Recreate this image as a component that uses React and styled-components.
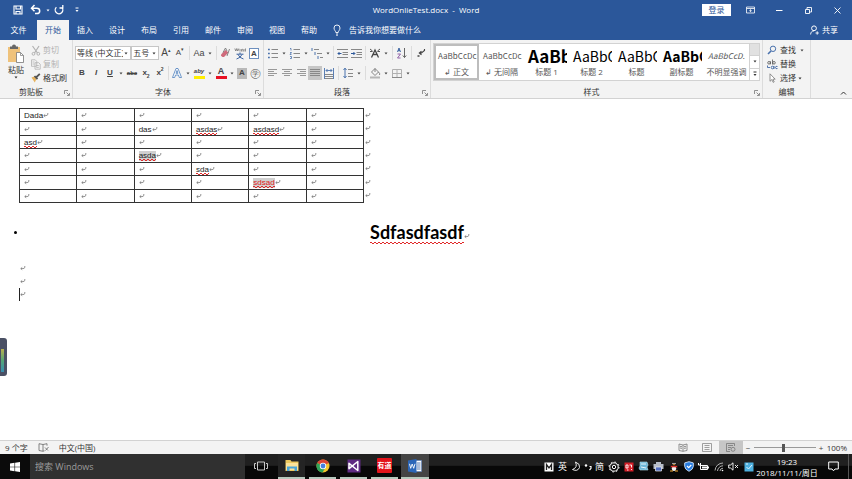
import React from "react";
import styled, { createGlobalStyle, css } from "styled-components";

const ui = '"Open Sans", "Noto Sans CJK SC", sans-serif';
const blue = "#2b579a";

const Global = createGlobalStyle`
  *, *::before, *::after { box-sizing: border-box; }
  body { margin: 0; font-family: ${ui}; font-size: 8px; line-height: 12px; color: #333; }
  button, input, select { font: inherit; color: inherit; margin: 0; padding: 0; border: 0; background: none; border-radius: 0; }
  svg { display: block; flex: none; }
`;

const Window = styled.div`
  position: relative;
  display: flex;
  flex-direction: column;
  min-height: 100vh;
  background: #fff;
  overflow: hidden;
`;

/* ---------- title bar ---------- */
const TitleBar = styled.header`
  display: grid;
  grid-template-columns: 1fr auto 1fr;
  align-items: center;
  height: 20px;
  background: ${blue};
  color: #fff;
`;
const QuickAccess = styled.div`
  display: flex;
  align-items: center;
  padding-left: 10px;
`;
const WindowControls = styled.div`
  display: flex;
  align-items: center;
  justify-content: flex-end;
`;
const DocTitle = styled.h1`
  margin: 0;
  font-size: 8px;
  font-weight: 400;
  line-height: 20px;
`;
const BarButton = styled.button`
  display: flex;
  align-items: center;
  justify-content: center;
  width: ${(p) => p.$w || 16}px;
  height: 18px;
`;
const SignIn = styled.button`
  width: 29px;
  height: 12px;
  margin-right: 5px;
  background: #fff;
  color: ${blue};
  line-height: 12px;
`;

/* ---------- tabs ---------- */
const TabBar = styled.nav`
  display: flex;
  align-items: stretch;
  height: 20px;
  background: ${blue};
  color: #fff;
`;
const Tab = styled.button`
  width: ${(p) => (p.$file ? 37 : 32)}px;
  line-height: 20px;
  ${(p) => p.$active && css`background: #f3f3f3; color: ${blue};`}
`;
const TellMe = styled.button`
  display: flex;
  align-items: center;
  gap: 8px;
  margin-left: 8px;
`;
const Share = styled.button`
  display: flex;
  align-items: center;
  gap: 3px;
  margin-left: auto;
  padding-right: 14px;
`;

/* ---------- ribbon ---------- */
const Ribbon = styled.div`
  display: flex;
  height: 59px;
  background: #f3f3f3;
  border-bottom: 1px solid #d2d2d2;
`;
const Group = styled.section`
  position: relative;
  display: flex;
  flex-direction: column;
  flex: ${(p) => (p.$grow ? "1 1 0" : "none")};
  min-width: 0;
  width: ${(p) => (p.$w ? p.$w + "px" : "auto")};
  padding: 3px 2px 0;
  border-right: 1px solid #dcdcdc;
`;
const GroupLabel = styled.h2`
  margin: auto ${(p) => (p.$wide ? 0 : 10)}px 0 0;
  font-size: 8px;
  font-weight: 400;
  line-height: 12px;
  text-align: center;
`;
const Launcher = styled.button`
  position: absolute;
  right: 2px;
  bottom: 2px;
`;
const ToolRow = styled.div`
  display: flex;
  align-items: center;
  height: 20px;
`;
const Tool = styled.button`
  display: flex;
  align-items: center;
  justify-content: center;
  flex: none;
  width: ${(p) => p.$w || 14}px;
  height: 14px;
  color: #444;
  background: ${(p) => (p.$on ? "#c6c6c6" : "none")};
`;
const Divider = styled.span`
  flex: none;
  width: 1px;
  height: 14px;
  margin: 0 ${(p) => p.$m || 2}px;
  background: #dcdcdc;
`;
const Glyph = styled.span`
  font-family: "Liberation Sans", sans-serif;
  font-size: ${(p) => p.$size || 9}px;
  font-weight: ${(p) => (p.$bold ? 700 : 400)};
  font-style: ${(p) => (p.$italic ? "italic" : "normal")};
  text-decoration: ${(p) => p.$line || "none"};
  line-height: 12px;
  sub, sup { font-size: 5px; line-height: 0; }
`;
const LetterBox = styled.span`
  width: 10px;
  height: 11px;
  background: ${(p) => (p.$fill ? "#b9b9b9" : "#fff")};
  border: ${(p) => (p.$fill ? "0" : "1px solid #6d8fbe")};
  font: 700 8px/10px "Liberation Sans", sans-serif;
  text-align: center;
`;
const Underbar = styled.span`
  width: 11px;
  height: 12px;
  border-bottom: 3px solid ${(p) => p.$color};
  font: ${(p) => (p.$italic ? "italic 700 6px/9px" : "700 9px/9px")} "Liberation Sans", sans-serif;
  text-align: center;
`;
const Combo = styled.label`
  display: grid;
  align-items: center;
  width: ${(p) => p.$w}px;
  height: 14px;
  background: #fff;
  border: 1px solid #c6c6c6;
  select, svg { grid-area: 1 / 1; }
  select { appearance: none; width: 100%; padding: 0 7px 0 1px; line-height: 12px; overflow: hidden; }
  svg { justify-self: end; margin-right: 2px; pointer-events: none; }
`;
const Clipboard = styled.div`
  display: flex;
  gap: 5px;
  padding-left: 4px;
`;
const PasteButton = styled.button`
  display: flex;
  flex-direction: column;
  align-items: center;
  width: 20px;
  padding-top: 1px;
`;
const Stack = styled.div`
  display: flex;
  flex-direction: column;
`;
const LineButton = styled.button`
  display: flex;
  align-items: center;
  gap: 2px;
  height: 14px;
  color: ${(p) => (p.$off ? "#b1b1b1" : "#333")};
  white-space: nowrap;
`;
const IconSlot = styled.span`
  display: flex;
  align-items: center;
  justify-content: center;
  width: 13px;
`;
const Gallery = styled.div`
  display: flex;
  height: 38px;
  background: #fff;
  border: 1px solid #d2d2d2;
`;
const StyleTile = styled.button`
  display: flex;
  flex-direction: column;
  align-items: center;
  flex: 1 1 0;
  min-width: 0;
  overflow: hidden;
  border: 2px solid ${(p) => (p.$active ? "#bdbdbd" : "transparent")};
  color: #555;
  white-space: nowrap;
`;
const Preview = styled.span`
  width: 100%;
  height: 20px;
  padding-left: 2px;
  overflow: hidden;
  white-space: nowrap;
  text-align: left;
  color: ${(p) => (p.$size > 10 ? "#000" : "#555")};
  font: ${(p) => (p.$italic ? "italic" : "normal")} ${(p) => (p.$bold ? 700 : 400)} ${(p) => p.$size}px/20px "Noto Sans CJK SC", sans-serif;
`;
const GalleryScroll = styled.div`
  display: flex;
  flex-direction: column;
  width: 10px;
  border-left: 1px solid #d2d2d2;
`;
const ScrollButton = styled.button`
  display: flex;
  align-items: center;
  justify-content: center;
  flex: 1;
  background: ${(p) => (p.$off ? "#e1e1e1" : "#fff")};
  & + & { border-top: 1px solid #d2d2d2; }
`;
const Collapse = styled.button`
  margin: auto 5px 2px auto;
`;
const RibbonEnd = styled.div`
  display: flex;
  width: 41px;
`;

/* ---------- document ---------- */
const Page = styled.main`
  flex: 1;
  padding: 9px 26px 0 19px;
  color: #222;
  font-family: "Liberation Sans", sans-serif;
`;
const Grid = styled.table`
  width: 354px;
  height: 95px;
  table-layout: fixed;
  border-collapse: collapse;
  line-height: 11px;
`;
const Cell = styled.td`
  padding: 1px 0 0 4px;
  border: 1px solid #333;
  white-space: nowrap;
`;
const EndCell = styled.td`
  width: 9px;
  padding: 0 0 0 1px;
`;
const Run = styled.span`
  color: ${(p) => (p.$red ? "#e02020" : "inherit")};
  background-color: ${(p) => (p.$marked ? "#d0d0d0" : "transparent")};
  ${(p) => p.$wavy && css`
    padding-bottom: 1px;
    background-image:
      repeating-linear-gradient(90deg, #e02828 0 2px, transparent 2px 4px),
      repeating-linear-gradient(90deg, transparent 0 2px, #e02828 2px 4px);
    background-size: 100% 1px;
    background-position: 0 calc(100% - 1px), 0 100%;
    background-repeat: no-repeat;
  `}
`;
const Return = styled.svg`
  display: inline-block;
  vertical-align: baseline;
`;
const Heading = styled.h2`
  display: grid;
  grid-template-columns: 1fr auto 1fr;
  align-items: center;
  margin: 16px 0 17px -5px;
  color: #000;
  font: 700 18px/26px Lato, sans-serif;
`;
const Bullet = styled.span`
  width: 3px;
  height: 3px;
  border-radius: 50%;
  background: #000;
`;
const Para = styled.p`
  margin: 0;
  line-height: 13px;
  height: 13px;
  border-left: 1px solid ${(p) => (p.$caret ? "#222" : "transparent")};
`;
const SideWidget = styled.aside`
  position: absolute;
  left: 0;
  top: 338px;
  width: 7px;
  height: 38px;
  padding: 11px 3px 4px 1px;
  background: #4a5064;
  border-radius: 0 3px 3px 0;
`;
const Meter = styled.div`
  height: 23px;
  background: linear-gradient(#b9b04f, #55a676 50%, #368eb1);
`;

/* ---------- status bar ---------- */
const StatusBar = styled.footer`
  display: flex;
  align-items: center;
  height: 14px;
  padding: 0 5px;
  background: #f3f3f3;
  border-top: 1px solid #d2d2d2;
`;
const StatusItem = styled.button`
  margin-right: ${(p) => p.$gap || 0}px;
  line-height: 12px;
`;
const StatusRight = styled.div`
  display: flex;
  align-items: center;
  margin-left: auto;
`;
const View = styled.button`
  display: flex;
  align-items: center;
  justify-content: center;
  width: 24px;
  height: 13px;
  background: ${(p) => (p.$on ? "#c6c6c6" : "none")};
`;
const Zoom = styled.input`
  appearance: none;
  width: 62px;
  height: 9px;
  background: linear-gradient(#999, #999) center / 100% 1px no-repeat;
  &::-webkit-slider-thumb { appearance: none; width: 3px; height: 8px; background: #555; }
`;

/* ---------- taskbar ---------- */
const Taskbar = styled.footer`
  display: flex;
  height: 25px;
  background: linear-gradient(#202020 0 45%, #080808 50%);
  color: #fff;
`;
const StartButton = styled.button`
  display: flex;
  align-items: center;
  justify-content: center;
  width: 30px;
  background: #0b0b0b;
`;
const SearchBox = styled.input`
  width: 215px;
  padding: 0 5px;
  background: #303030;
  color: #aaa;
  font-size: 9px;
  &::placeholder { color: #9c9c9c; opacity: 1; }
`;
const TaskButton = styled.button`
  display: flex;
  align-items: center;
  justify-content: center;
  width: ${(p) => (p.$active ? 28 : 27)}px;
  margin: 0 ${(p) => (p.$active ? 1 : 2)}px;
  background: ${(p) => (p.$active ? "#444" : p.$lit ? "#242424" : "none")};
  border-bottom: 2px solid ${(p) => (p.$idle ? "transparent" : "#b6c9bd")};
`;
const Tray = styled.div`
  display: flex;
  align-items: center;
  margin-left: auto;
`;
const TrayButton = styled.button`
  display: flex;
  align-items: center;
  justify-content: center;
  width: ${(p) => p.$w || 15}px;
  height: 22px;
  font-size: 9px;
`;
const Clock = styled.button`
  width: 62px;
  font-size: 8px;
  line-height: 11px;
  white-space: nowrap;
`;
const YoudaoTile = styled.span`
  width: 15px;
  height: 15px;
  border-radius: 1px;
  background: #e3141b;
  font: 700 7px/15px "Noto Sans CJK SC", sans-serif;
  text-align: center;
`;
const Edge = styled.span`
  width: 1px;
  height: 25px;
  margin-right: 3px;
  background: #555;
`;

/* ---------- icons ---------- */
const Icon = ({ w = 12, h = 12, children }) => (
  <svg width={w} height={h} viewBox={`0 0 ${w} ${h}`} fill="none" stroke="currentColor" strokeWidth="1" aria-hidden="true">
    {children}
  </svg>
);
const Caret = () => (
  <Icon w={4} h={3}><path d="M.5.5h3L2 2.500z" fill="currentColor" stroke="none" /></Icon>
);
const CaretTool = () => <Tool $w={8} aria-label="更多"><Caret /></Tool>;
const Mark = () => (
  <Return width="6" height="5" viewBox="0 0 6 5" fill="none" stroke="#777" strokeWidth=".8" aria-hidden="true">
    <path d="M4.800 0v1.200Q4.600 2.600 3 2.600H.8M2.200 1.400L.8 2.600l1.400 1.200" />
  </Return>
);
const LaunchIcon = () => (
  <Launcher aria-label="对话框">
    <Icon w={6} h={6}><path d="M.5 4V.5H4M2.500 2.500l2.500 2.500M5.500 3v2.500H3" stroke="#777" strokeWidth=".8" /></Icon>
  </Launcher>
);
const bars = (rows) => rows.map(([x1, x2], i) => <path key={i} d={`M${x1} ${1.5 + i * 2}H${x2}`} />);

const icons = {
  save: <Icon w={10}><path d="M1 2h8v8H1zM3 2v3h4.500V2M3 10V7.500h4V10" strokeWidth="1.100" /></Icon>,
  undo: <Icon><path d="M1.500 4.200h5.200a3 2.700 0 010 5.400H5M4.500 1L1.500 4.200l3 3" strokeWidth="1.500" /></Icon>,
  redo: <Icon><path d="M3.400 3.200A3.800 3.800 0 108.800 3.400M9.800 1v3H6.500" strokeWidth="1.300" /></Icon>,
  custom: <Icon w={6} h={6}><path d="M1.500 1h3" /><path d="M1.500 3h3L3 5z" fill="currentColor" stroke="none" /></Icon>,
  ribbonOpt: <Icon w={9} h={8}><path d="M.5 1h8v6h-8zM.5 2.500h8M4.500 6V3.800M3.300 4.800l1.200-1 1.200 1" strokeWidth=".8" /></Icon>,
  min: <Icon w={7} h={7}><path d="M0 3.500h6.500" /></Icon>,
  restore: <Icon w={7} h={7}><path d="M.5 2.500h4v4h-4zM2 2.500V.5h4.500v4.500h-2" strokeWidth=".9" /></Icon>,
  close: <Icon w={7} h={7}><path d="M.5.5l6 6M6.500.5l-6 6" strokeWidth=".9" /></Icon>,
  bulb: <Icon w={8} h={12}><path d="M2.800 8.500C2.800 7 1 6.200 1 4a3 3 0 016 0c0 2.200-1.800 3-1.800 4.500zM3 10h2M3.200 11.300h1.600" strokeWidth=".9" /></Icon>,
  person: <Icon w={9} h={10}><circle cx="4" cy="3.300" r="2.400" /><path d="M.6 9.500C.7 7 2 6 4 5.900M5.500 8h3.300M7.200 6.300v3.400" strokeWidth=".9" /></Icon>,
  paste: <Icon w={18} h={20}><path d="M1 3h12v15H1z" fill="#efc27b" stroke="none" /><path d="M3 2.500h2a2 2 0 014 0h2V5H3z" fill="#666" stroke="none" /><path d="M9.500 8.500h4l3 3v7h-7z" fill="#fff" stroke="#777" strokeWidth=".8" /><path d="M13.500 8.500v3h3" stroke="#777" strokeWidth=".7" /></Icon>,
  cut: <Icon w={10} h={11}><path d="M1.500 1l5 7M8 1L3.500 8" strokeWidth="1.200" /><circle cx="2.500" cy="8.800" r="1.400" /><circle cx="7.300" cy="8.800" r="1.400" /></Icon>,
  copy: <Icon w={10} h={11}><path d="M.5.8h3.700l1.500 1.500v5H.5zM4 3.700h3.700l1.500 1.500v5H4zM1.500 3h2M1.500 5h2M5.200 6.500h2.600M5.200 8.400h2.600" fill="#f3f3f3" strokeWidth=".8" /></Icon>,
  brush: <Icon w={10} h={10}><path d="M.5 4.500l3-1 2 2.200-1.700 3.800z" fill="#e6b35f" stroke="none" /><path d="M3.500 3l3 3.200M5 4.500l3.800-3.700" stroke="#555" strokeWidth="1.800" /></Icon>,
  eraser: <Icon><path d="M1 7.500L5.500 3l3 2.500L4 10H2.500L1 8.800z" fill="#cf6a7b" stroke="none" /><path d="M3 5.500L5.500 1l1.500 3M9.500 2L7 9" stroke="#777" strokeWidth=".9" /></Icon>,
  bullets: <Icon><g stroke="#888">{[2.5, 6.5, 10.5].map((y) => <path key={y} d={`M4.5 ${y}h6.500`} />)}</g><g stroke="#4a72ad" strokeWidth="1.600">{[2.5, 6.5, 10.5].map((y) => <path key={y} d={`M1 ${y}h1.800`} />)}</g></Icon>,
  numbers: <Icon><g stroke="#888">{[2.5, 6.5, 10.5].map((y) => <path key={y} d={`M4.5 ${y}h6.500`} />)}</g><path d="M1 1.500h1v2M1 5.500h1.500L1 7.500h1.500M1 9.500h1.500v2H1" stroke="#4a72ad" strokeWidth=".8" /></Icon>,
  multi: <Icon><path d="M3 2.500h5M6 6.500h5M9 10.500h3" stroke="#888" /><path d="M1 1v3M4 5v3M7 9v3" stroke="#4a72ad" /></Icon>,
  outdent: <Icon w={11} h={11}><path d="M0 1.500h11M5.500 4.500h5.500M5.500 6.500h5.500M0 9.500h11" stroke="#888" /><path d="M4.500 5.500H1M2.500 4L1 5.500 2.500 7" stroke={blue} /></Icon>,
  indent: <Icon w={11} h={11}><path d="M0 1.500h11M5.500 4.500h5.500M5.500 6.500h5.500M0 9.500h11" stroke="#888" /><path d="M0 5.500h3.800M2.400 4l1.500 1.500L2.400 7" stroke={blue} /></Icon>,
  asian: <Icon><path d="M2.500 10.500L6 3l3.500 7.500M4 7.500h4" strokeWidth="1.300" /><path d="M1 2l2.500 2M11 2L8.500 4M1 4.500h2.500M8.500 4.500H11" strokeWidth=".9" /></Icon>,
  sort: <Icon><path d="M1.500 5L3 1l1.500 4M2 3.700h2" stroke={blue} strokeWidth=".9" /><path d="M1.500 7h3l-3 4h3" stroke="#8854a0" strokeWidth=".9" /><path d="M8.500 1v9.500M6.800 8.500l1.700 2 1.700-2" stroke="#666" /></Icon>,
  pilcrow: <Icon><path d="M9.500 2v1.500L6.500 6H4.500M6.500 4.200L4.300 6l2.200 1.800" strokeWidth="1.100" /><path d="M2.500 9h2" strokeWidth="1.500" /></Icon>,
  left: <Icon w={10} h={11}><g stroke="#999">{bars([[0, 9], [0, 6], [0, 9], [0, 6]])}</g></Icon>,
  center: <Icon w={10} h={11}><g stroke="#999">{bars([[0, 10], [2, 8], [0, 10], [2, 8]])}</g></Icon>,
  right: <Icon w={10} h={11}><g stroke="#999">{bars([[1, 10], [4, 10], [1, 10], [4, 10]])}</g></Icon>,
  justify: <Icon w={10} h={11}><g stroke="#888">{bars([[0, 10], [0, 10], [0, 10], [0, 10]])}</g></Icon>,
  distribute: <Icon w={10} h={11}><path d="M.5 0v11M9.500 0v11M2 2.500h6M3.500 1L2 2.500 3.500 4M6.500 1L8 2.500 6.500 4" stroke="#4a72ad" strokeWidth=".9" /><path d="M1 6.500h8M1 8.500h8M1 10.500h8" stroke="#888" /></Icon>,
  spacing: <Icon w={10} h={12}><path d="M2 1v10M.5 3L2 1.200 3.500 3M.5 9L2 10.800 3.500 9" stroke="#4a72ad" /><path d="M5 2.500h5M5 6.500h5M5 9.500h5" stroke="#888" /></Icon>,
  shading: <Icon><path d="M2.500 5L6 1.500l3.500 3.500L6 8.500zM6 1.500V5M9.500 5q2 2 1 3" stroke="#777" strokeWidth=".9" /><path d="M1 10.500h10" stroke="#b5b5b5" strokeWidth="2" /></Icon>,
  borders: <Icon w={10} h={11}><path d="M.5 1.500h9v8h-9zM5 1.500v8M.5 5.500h9" stroke="#b0b0b0" /><path d="M0 9.500h10" stroke="#888" /></Icon>,
  textFx: <Icon><path d="M1.500 10.500L5 1.500h2l3.500 9H8.300L7.500 8h-3l-.8 2.500zM5 6.300h2L6 3.500z" stroke="#4a7dbd" fill="#fff" strokeWidth=".8" /></Icon>,
  pinyin: <Icon w={12} h={13}><path d="M.8 1.500l1 2.500 1-2.500 1 2.500 1-2.500M6 2v2.500M7.500 4.500V2.500q1.500-.8 1.500.5v1.500M10 2v2.500M11.500 1.500v3" stroke="#666" strokeWidth=".7" /><path d="M6 5.500v1.500M2.500 7.200h7M4 7.500Q5.500 11 9.500 12M8 7.500Q6.500 11 2.500 12" stroke={blue} strokeWidth=".9" /></Icon>,
  replace: <Icon w={12} h={11}><g strokeWidth=".8" stroke="#555"><circle cx="3" cy="3.800" r="1.300" /><path d="M4.500 2.300v3M6.500.5v5" /><circle cx="8" cy="3.800" r="1.300" /></g><g strokeWidth=".8" stroke={blue}><circle cx="6.500" cy="8.500" r="1.300" /><path d="M8 7v3M11.500 7.500q-2-.8-2 1t2 1M1.500 6.500v2h2.500" /></g></Icon>,
  find: <Icon w={10} h={10}><circle cx="6" cy="3.800" r="2.700" stroke="#4a72ad" /><path d="M4 6L1 9" stroke="#4a72ad" strokeWidth="1.600" /></Icon>,
  select: <Icon w={10} h={10}><path d="M3 .8v7.500l1.800-1.700L6.200 9.400l1-.5-1.300-2.700h2.300z" stroke="#777" fill="#fff" strokeWidth=".8" /></Icon>,
  chevron: <Icon w={7} h={6}><path d="M1 4.500l2.500-2.500L6 4.500" /></Icon>,
  proof: <Icon w={11} h={9}><path d="M5 1.500L1 .7v6.800l4 .8 1.500-.5M5 1.500V8M5 1.500l4-.8v2M7 4.500l3 3M7.500 7.500l3-3.500" stroke="#666" strokeWidth=".8" /></Icon>,
  read: <Icon w={10} h={9}><path d="M5 2L1 1v6.500l4 .8 4-.8V1zM5 2v6.300M2 3.300l2 .4M2 5l2 .4M6 3.700l2-.4M6 5.400L8 5" stroke="#777" strokeWidth=".8" /></Icon>,
  print: <Icon w={10} h={9}><path d="M.5.5h9v8h-9zM2.500 2.500h5M2.500 4.500h5M2.500 6.500h5" stroke="#888" strokeWidth=".8" /></Icon>,
  web: <Icon w={10} h={9}><path d="M8.500 3V.5h-8v8H4M2 2.500h5M2 4.500h3M2 6.500h2" stroke="#777" strokeWidth=".8" /><circle cx="7" cy="6.300" r="2" stroke="#777" strokeWidth=".8" /></Icon>,
  windows: <Icon w={10} h={10}><path d="M0 1.500l4.500-.7v3.900H0zM5.100.7L10 0v4.700H5.100zM0 5.300h4.500v3.900L0 8.500zM5.100 5.300H10V10l-4.900-.7z" fill="#fff" stroke="none" /></Icon>,
  taskView: <Icon w={14} h={10}><path d="M3.500 1h7v8h-7zM2 2.500H.5v5H2M12 2.500h1.500v5H12" stroke="#ddd" strokeWidth=".9" /></Icon>,
  explorer: <Icon w={14} h={13}><path d="M.5 1h5l1 1.500h7V12H.5z" fill="#ecc85f" stroke="none" /><path d="M1 4h12v7H1z" fill="#fbe39a" stroke="none" /><path d="M2 12V7.500h10V12H9.500V9.500h-5V12z" fill="#4aa5d8" stroke="none" /></Icon>,
  chrome: <Icon w={14} h={14}><g stroke="none"><circle cx="7" cy="7" r="6.500" fill="#f4c52c" /><path d="M7 7L1.200 4A6.500 6.500 0 0112.800 4z" fill="#dc4437" /><path d="M7 7L1.200 4A6.500 6.500 0 006.500 13.500L9.500 8.500z" fill="#2fa35a" /><circle cx="7" cy="7" r="3.200" fill="#fff" /><circle cx="7" cy="7" r="2.400" fill="#467fe1" /></g></Icon>,
  vs: <Icon w={14} h={14}><path d="M.5.5h13v13H.5z" fill="#5f2b83" stroke="none" /><path d="M2 4.300v5.400L10.800 2.500v9z" stroke="#fff" strokeWidth="1.500" strokeLinejoin="round" /></Icon>,
  word: <Icon w={14} h={14}><path d="M6 1.500h7.500v11H6z" fill="#fff" stroke="#5b84c4" strokeWidth=".6" /><path d="M9 4h3.500M9 6h3.500M9 8h3.500M9 10h3.500" stroke={blue} strokeWidth=".8" /><path d="M0 1.500L8.500 0v14L0 12.500z" fill="#2b66b8" stroke="none" /><path d="M1.500 4.800l1.200 4.500L4.200 5l1.500 4.300L7 4.800" stroke="#fff" strokeWidth=".9" /></Icon>,
  ime: <Icon w={10} h={10}><path d="M.5.5h9v9h-9z" fill="#fff" stroke="none" /><path d="M2.500 8V2.500L5 6l2.500-3.500V8" stroke="#222" strokeWidth="1.300" /></Icon>,
  moon: <Icon w={10} h={11}><path d="M4.500 1q2.500 5.500-3 7.500 5 2.500 7-2Q9.500 3 4.500 1z" strokeWidth=".9" /></Icon>,
  punct: <Icon w={8} h={8}><circle cx="2" cy="2.500" r="1.200" fill="#fff" stroke="none" /><path d="M5.500 3.500h1.500v1.800L5.500 7" strokeWidth="1.200" /></Icon>,
  gear: <Icon w={12} h={12}><circle cx="6" cy="6" r="4.200" /><circle cx="6" cy="6" r="5" strokeDasharray="1.600 2.327" /><circle cx="6" cy="6" r="1.700" /></Icon>,
  redApp: <Icon w={10} h={10}><path d="M.5.5h9v9h-9z" fill="#d51f28" stroke="none" /><path d="M2 3h2v3H2zM5.500 3h2v2.500M3 8h1.500M7 7.500h1" stroke="#fff" strokeWidth=".9" /></Icon>,
  cube: <Icon w={11} h={11}><path d="M2 1h7l1 3-1 2 1 3H2L1 7l1-2z" fill="#6db7d8" stroke="#b7e0ef" strokeWidth=".6" /><path d="M3 3h5M3 6l5 1" stroke="#e8f6fb" /></Icon>,
  printer: <Icon w={11} h={11}><path d="M3 1h5v2h2.500v5h-10V3H3z" fill="#b7bdc8" stroke="none" /><path d="M2.500 6h6v4h-6z" fill="#516dc0" stroke="#eee" strokeWidth=".7" /></Icon>,
  penguin: <Icon w={10} h={11}><g stroke="none"><path d="M5 .5q3 0 3 3.500l1.200 3L8 10H2L.8 7 2 4Q2 .5 5 .5z" fill="#161616" /><ellipse cx="5" cy="7.500" rx="2.200" ry="2.500" fill="#f3f3f3" /><path d="M1.800 4.800h6.400v1.500H1.800z" fill="#dc332c" /><path d="M3.500 3.300h3L5 4.600zM1 9.500h3v1H1zM6 9.500h3v1H6z" fill="#f0a32c" /><circle cx="4" cy="2.500" r=".7" fill="#fff" /><circle cx="6" cy="2.500" r=".7" fill="#fff" /></g></Icon>,
  shield: <Icon w={10} h={11}><path d="M5 .7l4.300 1.200v3.600Q9 8.500 5 10.300 1 8.500.7 5.500V1.900z" fill="#287de0" stroke="#d4e8ff" strokeWidth=".9" /><path d="M3 5l1.700 1.700L7.300 4" stroke="#fff" strokeWidth="1.200" /></Icon>,
  battery: <Icon w={11} h={9}><path d="M2.500 3.500h7v4h-7zM10.500 4.500v2M.5 1v2h2M2.500 1v3" /><path d="M4 4.500h5v2H4z" fill="#fff" stroke="none" /></Icon>,
  wifi: <Icon w={10} h={10}><path d="M1 8.500A8 8 0 019 1M3.500 9A5.500 5.500 0 019 3.800M6 9a3 3 0 013-2.800" stroke="#bbb" strokeWidth=".9" /><circle cx="8.500" cy="8.500" r=".8" fill="#fff" stroke="none" /></Icon>,
  mute: <Icon w={11} h={9}><path d="M.7 3h1.800L5 .8v7.400L2.500 6H.7zM7 3l3 3M10 3L7 6" strokeWidth=".9" /></Icon>,
  checkApp: <Icon w={10} h={10}><path d="M.5.5h9v9h-9z" fill="#4db0df" stroke="none" /><path d="M2.500 5l2 2 3.500-4M2 2h2" stroke="#dff4ff" /></Icon>,
  notice: <Icon w={11} h={11}><path d="M.7 1h9.600v7H7L5.500 9.800 4 8H.7z" /></Icon>,
};

const tabs = ["文件", "开始", "插入", "设计", "布局", "引用", "邮件", "审阅", "视图", "帮助"];
const styleTiles = [
  { label: "↲ 正文", text: "AaBbCcDc", size: 8, active: true },
  { label: "↲ 无间隔", text: "AaBbCcDc", size: 8 },
  { label: "标题 1", text: "AaBb", size: 17, bold: true },
  { label: "标题 2", text: "AaBbC", size: 14 },
  { label: "标题", text: "AaBbC", size: 14 },
  { label: "副标题", text: "AaBbC", size: 14, bold: true },
  { label: "不明显强调", text: "AaBbCcD.", size: 8, italic: true },
];
const w = (t, extra) => ({ t, wavy: true, ...extra });
const rows = [
  [{ t: "Dada" }, 0, 0, 0, 0, 0],
  [0, 0, { t: "das" }, w("asdas"), w("asdasd"), 0],
  [w("asd"), 0, 0, 0, 0, 0],
  [0, 0, w("asda", { marked: true }), 0, 0, 0],
  [0, 0, 0, w("sda"), 0, 0],
  [0, 0, 0, 0, w("sdsad", { marked: true, red: true }), 0],
  [0, 0, 0, 0, 0, 0],
];

const T = ({ i, label, ...p }) => <Tool aria-label={label || i} {...p}>{icons[i]}</Tool>;

export default function App() {
  return (
    <Window>
      <Global />
      <TitleBar>
        <QuickAccess>
          <BarButton aria-label="保存">{icons.save}</BarButton>
          <BarButton $w={20} aria-label="撤消">{icons.undo}</BarButton>
          <BarButton $w={4} aria-label="撤消列表"><Caret /></BarButton>
          <BarButton $w={18} aria-label="重复">{icons.redo}</BarButton>
          <BarButton $w={18} aria-label="自定义">{icons.custom}</BarButton>
        </QuickAccess>
        <DocTitle>WordOnlieTest.docx&nbsp; -&nbsp; Word</DocTitle>
        <WindowControls>
          <SignIn>登录</SignIn>
          <BarButton $w={29} aria-label="功能区选项">{icons.ribbonOpt}</BarButton>
          <BarButton $w={29} aria-label="最小化">{icons.min}</BarButton>
          <BarButton $w={29} aria-label="还原">{icons.restore}</BarButton>
          <BarButton $w={29} aria-label="关闭">{icons.close}</BarButton>
        </WindowControls>
      </TitleBar>
      <TabBar>
        {tabs.map((t, i) => <Tab key={t} $file={i === 0} $active={i === 1}>{t}</Tab>)}
        <TellMe>{icons.bulb}告诉我你想要做什么</TellMe>
        <Share>{icons.person}共享</Share>
      </TabBar>

      <Ribbon>
        <Group $w={73}>
          <Clipboard>
            <PasteButton>{icons.paste}粘贴<Caret /></PasteButton>
            <Stack>
              <LineButton $off>{icons.cut}剪切</LineButton>
              <LineButton $off>{icons.copy}复制</LineButton>
              <LineButton>{icons.brush}格式刷</LineButton>
            </Stack>
          </Clipboard>
          <GroupLabel>剪贴板</GroupLabel>
          <LaunchIcon />
        </Group>

        <Group $w={191}>
          <ToolRow>
            <Combo $w={57}><select aria-label="字体"><option>等线 (中文正文)</option></select><Caret /></Combo>
            <Combo $w={28}><select aria-label="字号"><option>五号</option></select><Caret /></Combo>
            <Tool aria-label="增大字号"><Glyph $size={10}>A<sup>▴</sup></Glyph></Tool>
            <Tool aria-label="减小字号"><Glyph $size={8}>A<sup>▾</sup></Glyph></Tool>
            <Divider />
            <Tool aria-label="更改大小写"><Glyph>Aa</Glyph></Tool><CaretTool />
            <Divider />
            <T i="eraser" label="清除格式" />
            <T i="pinyin" label="拼音指南" />
            <Tool aria-label="字符边框"><LetterBox>A</LetterBox></Tool>
          </ToolRow>
          <ToolRow>
            <Tool aria-label="加粗"><Glyph $bold $size={8}>B</Glyph></Tool>
            <Tool aria-label="倾斜"><Glyph $bold $italic $size={8}>I</Glyph></Tool>
            <Tool aria-label="下划线"><Glyph $bold $size={8} $line="underline">U</Glyph></Tool><CaretTool />
            <Tool aria-label="删除线"><Glyph $bold $size={6} $line="line-through">abc</Glyph></Tool>
            <Tool aria-label="下标"><Glyph $bold $size={8}>x<sub>2</sub></Glyph></Tool>
            <Tool aria-label="上标"><Glyph $bold $size={8}>x<sup>2</sup></Glyph></Tool>
            <Divider $m={1} />
            <T i="textFx" label="文本效果" /><CaretTool />
            <Tool aria-label="突出显示"><Underbar $color="#ffee00" $italic>aby</Underbar></Tool><CaretTool />
            <Tool aria-label="字体颜色"><Underbar $color="#e81123">A</Underbar></Tool><CaretTool />
            <Tool $w={12} aria-label="字符底纹"><LetterBox $fill>A</LetterBox></Tool>
            <Tool aria-label="带圈字符"><Glyph $size={11}>㊫</Glyph></Tool>
          </ToolRow>
          <GroupLabel>字体</GroupLabel>
          <LaunchIcon />
        </Group>

        <Group $w={167}>
          <ToolRow>
            <T i="bullets" label="项目符号" /><CaretTool />
            <T i="numbers" label="编号" /><CaretTool />
            <T i="multi" label="多级列表" /><CaretTool />
            <Divider $m={1} />
            <T i="outdent" label="减少缩进" /><T i="indent" label="增加缩进" />
            <Divider />
            <T i="asian" label="中文版式" /><CaretTool />
            <Divider />
            <T i="sort" label="排序" />
            <Divider />
            <T i="pilcrow" label="显示标记" />
          </ToolRow>
          <ToolRow>
            <T i="left" label="左对齐" /><T i="center" label="居中" /><T i="right" label="右对齐" />
            <T i="justify" label="两端对齐" $on /><T i="distribute" label="分散对齐" />
            <Divider />
            <T i="spacing" label="行距" /><CaretTool />
            <Divider />
            <T i="shading" label="底纹" /><CaretTool />
            <T i="borders" label="边框" /><CaretTool />
          </ToolRow>
          <GroupLabel>段落</GroupLabel>
          <LaunchIcon />
        </Group>

        <Group $grow>
          <Gallery>
            {styleTiles.map((s) => (
              <StyleTile key={s.label} $active={s.active}>
                <Preview $size={s.size} $bold={s.bold} $italic={s.italic}>{s.text}</Preview>
                {s.label}
              </StyleTile>
            ))}
            <GalleryScroll>
              <ScrollButton $off aria-label="上一行" />
              <ScrollButton aria-label="下一行"><Caret /></ScrollButton>
              <ScrollButton aria-label="其他">{icons.custom}</ScrollButton>
            </GalleryScroll>
          </Gallery>
          <GroupLabel>样式</GroupLabel>
          <LaunchIcon />
        </Group>

        <Group $w={48}>
          <Stack>
            <LineButton><IconSlot>{icons.find}</IconSlot>查找<CaretTool /></LineButton>
            <LineButton><IconSlot>{icons.replace}</IconSlot>替换</LineButton>
            <LineButton><IconSlot>{icons.select}</IconSlot>选择<Caret /></LineButton>
          </Stack>
          <GroupLabel $wide>编辑</GroupLabel>
        </Group>
        <RibbonEnd><Collapse aria-label="折叠功能区">{icons.chevron}</Collapse></RibbonEnd>
      </Ribbon>

      <Page>
        <Grid>
          <colgroup>{rows[0].map((_, i) => <col key={i} />)}<col width="9" /></colgroup>
          <tbody>
            {rows.map((r, y) => (
              <tr key={y}>
                {r.map((c, x) => (
                  <Cell key={x}>
                    {c ? <Run $wavy={c.wavy} $marked={c.marked} $red={c.red}>{c.t}</Run> : null}<Mark />
                  </Cell>
                ))}
                <EndCell><Mark /></EndCell>
              </tr>
            ))}
          </tbody>
        </Grid>
        <Heading><Bullet /><span><Run $wavy>Sdfasdfasdf</Run><Mark /></span></Heading>
        <Para><Mark /></Para>
        <Para><Mark /></Para>
        <Para $caret><Mark /></Para>
      </Page>
      <SideWidget><Meter /></SideWidget>

      <StatusBar>
        <StatusItem $gap={10}>9 个字</StatusItem>
        <StatusItem $gap={10} aria-label="校对">{icons.proof}</StatusItem>
        <StatusItem>中文(中国)</StatusItem>
        <StatusRight>
          <View aria-label="阅读视图">{icons.read}</View>
          <View aria-label="页面视图">{icons.print}</View>
          <View $on aria-label="Web 版式">{icons.web}</View>
          <Tool $w={11} aria-label="缩小">−</Tool>
          <Zoom type="range" min="0" max="100" defaultValue="48" aria-label="缩放" />
          <Tool $w={11} aria-label="放大">+</Tool>
          <StatusItem>100%</StatusItem>
        </StatusRight>
      </StatusBar>

      <Taskbar>
        <StartButton aria-label="开始">{icons.windows}</StartButton>
        <SearchBox placeholder="搜索 Windows" aria-label="搜索 Windows" />
        <TaskButton $idle aria-label="任务视图">{icons.taskView}</TaskButton>
        <TaskButton $lit aria-label="文件资源管理器">{icons.explorer}</TaskButton>
        <TaskButton aria-label="Chrome">{icons.chrome}</TaskButton>
        <TaskButton aria-label="Visual Studio">{icons.vs}</TaskButton>
        <TaskButton><YoudaoTile>有道</YoudaoTile></TaskButton>
        <TaskButton $active aria-label="Word">{icons.word}</TaskButton>
        <Tray>
          <TrayButton $w={14} aria-label="输入法">{icons.ime}</TrayButton>
          <TrayButton $w={13}>英</TrayButton>
          <TrayButton $w={13} aria-label="半角">{icons.moon}</TrayButton>
          <TrayButton $w={11} aria-label="标点">{icons.punct}</TrayButton>
          <TrayButton $w={13}>简</TrayButton>
          <TrayButton aria-label="设置">{icons.gear}</TrayButton>
          {["redApp", "cube", "printer", "penguin", "shield", "battery", "wifi", "mute", "checkApp"].map((n) => (
            <TrayButton key={n} aria-label={n}>{icons[n]}</TrayButton>
          ))}
          <Clock>19:23<br />2018/11/11/周日</Clock>
          <TrayButton $w={30} aria-label="通知">{icons.notice}</TrayButton>
          <Edge />
        </Tray>
      </Taskbar>
    </Window>
  );
}
